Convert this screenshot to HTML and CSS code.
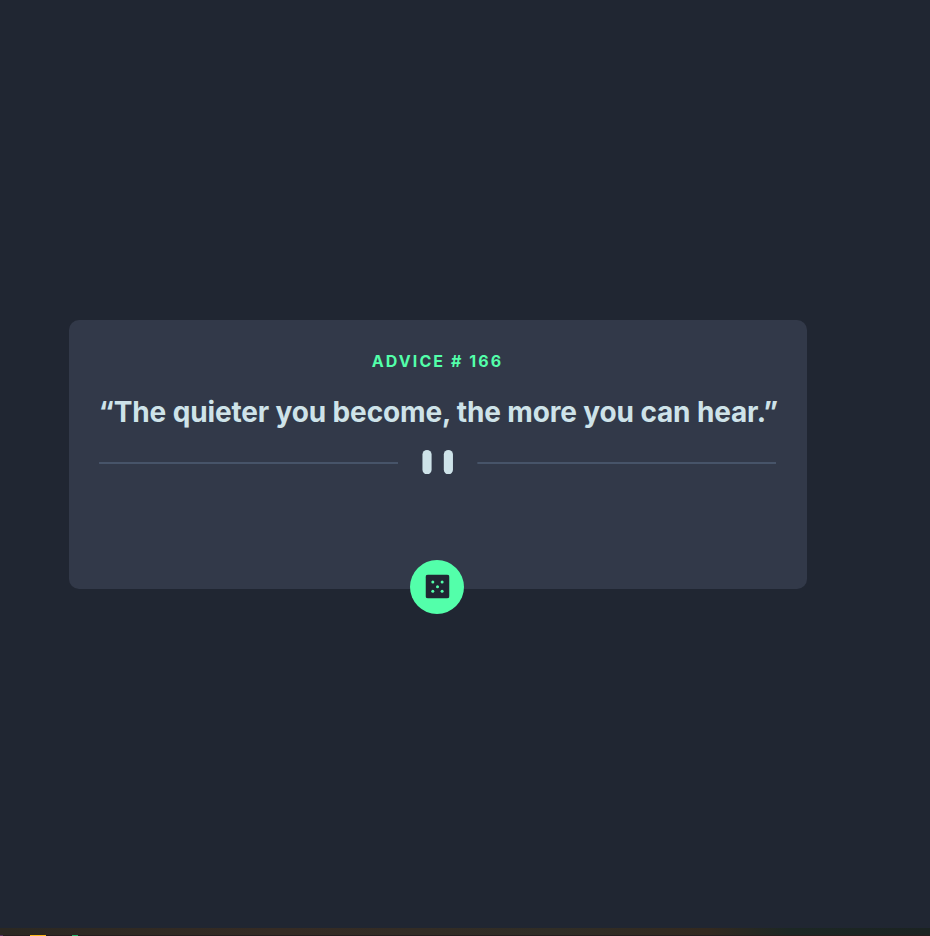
FILE: index.html
```
<!DOCTYPE html>
<html lang="en">
<head>
<meta charset="utf-8">
<title>Advice generator</title>
<link rel="stylesheet" href="styles.css">
</head>
<body>
<main class="page">
  <section class="card">
    <h1 class="label">ADVICE # 166</h1>
    <p class="quote">“The quieter you become, the more you can hear.”</p>
    <svg class="divider" viewBox="0 0 444 16" aria-hidden="true">
      <path fill="#4F5D74" d="M0 8h196v1H0zM248 8h196v1H248z"/>
      <g fill="#CEE3E9"><rect x="212" width="6" height="16" rx="3"/><rect x="226" width="6" height="16" rx="3"/></g>
    </svg>
    <button class="dice" aria-label="New advice">
      <svg viewBox="0 0 24 24" aria-hidden="true">
        <rect width="24" height="24" rx="2.7" fill="#202632"/>
        <g fill="#53FFAA"><circle cx="7.3" cy="7.6" r="1.5"/><circle cx="16.6" cy="7.6" r="1.5"/><circle cx="12" cy="12.3" r="1.5"/><circle cx="7.3" cy="16.7" r="1.5"/><circle cx="16.6" cy="16.7" r="1.5"/></g>
      </svg>
    </button>
  </section>
</main>
<footer class="taskbar"><span class="tab purple"></span><span class="tab yellow"></span><span class="tab green"></span></footer>
</body>
</html>
```
FILE: styles.css
```
* { box-sizing: border-box; }
body {
  margin: 0;
  height: 936px;
  display: flex;
  flex-direction: column;
  overflow: hidden;
  background: #202632;
  font-family: Inter, "Liberation Sans", sans-serif;
}
.page { flex: 1; padding: 320.4px 0 0 68.5px; }
.card {
  position: relative;
  width: 738px;
  height: 268.8px;
  padding: 29.6px 30.3px;
  border-radius: 10px;
  background: #323949;
  text-align: center;
}
.label {
  margin: 0;
  font-size: 16px;
  line-height: 22px;
  font-weight: 700;
  letter-spacing: 2.08px;
  color: #53ffaa;
}
.quote {
  margin: 20px 0 18px;
  font-size: 28px;
  line-height: 40px;
  font-weight: 700;
  letter-spacing: -0.14px;
  white-space: nowrap;
  color: #cee3e9;
}
.divider { display: block; width: 100%; }
.dice {
  position: absolute;
  left: 50%;
  bottom: -25px;
  width: 54.6px;
  height: 54.6px;
  margin-left: -27.7px;
  padding: 0;
  border: 0;
  border-radius: 50%;
  background: #53ffaa;
  display: flex;
  align-items: center;
  justify-content: center;
}
.dice svg { width: 24px; height: 24px; transform: translate(0.5px, -0.5px); }
.taskbar {
  height: 8px;
  display: flex;
  align-items: flex-end;
  background: linear-gradient(90deg, #2b2822, #352b24 30%, #302d26 60%, #33291f 76%, #1c2724 85%, #1b2322);
  border-bottom: 1px solid #251d1e;
}
.tab { height: 1px; margin-bottom: -1px; }
.purple { width: 3px; background: #54305e; }
.yellow { width: 16px; margin-left: 27px; background: #ffb91c; }
.green { width: 6px; margin-left: 26px; background: #28b66c; }
```
